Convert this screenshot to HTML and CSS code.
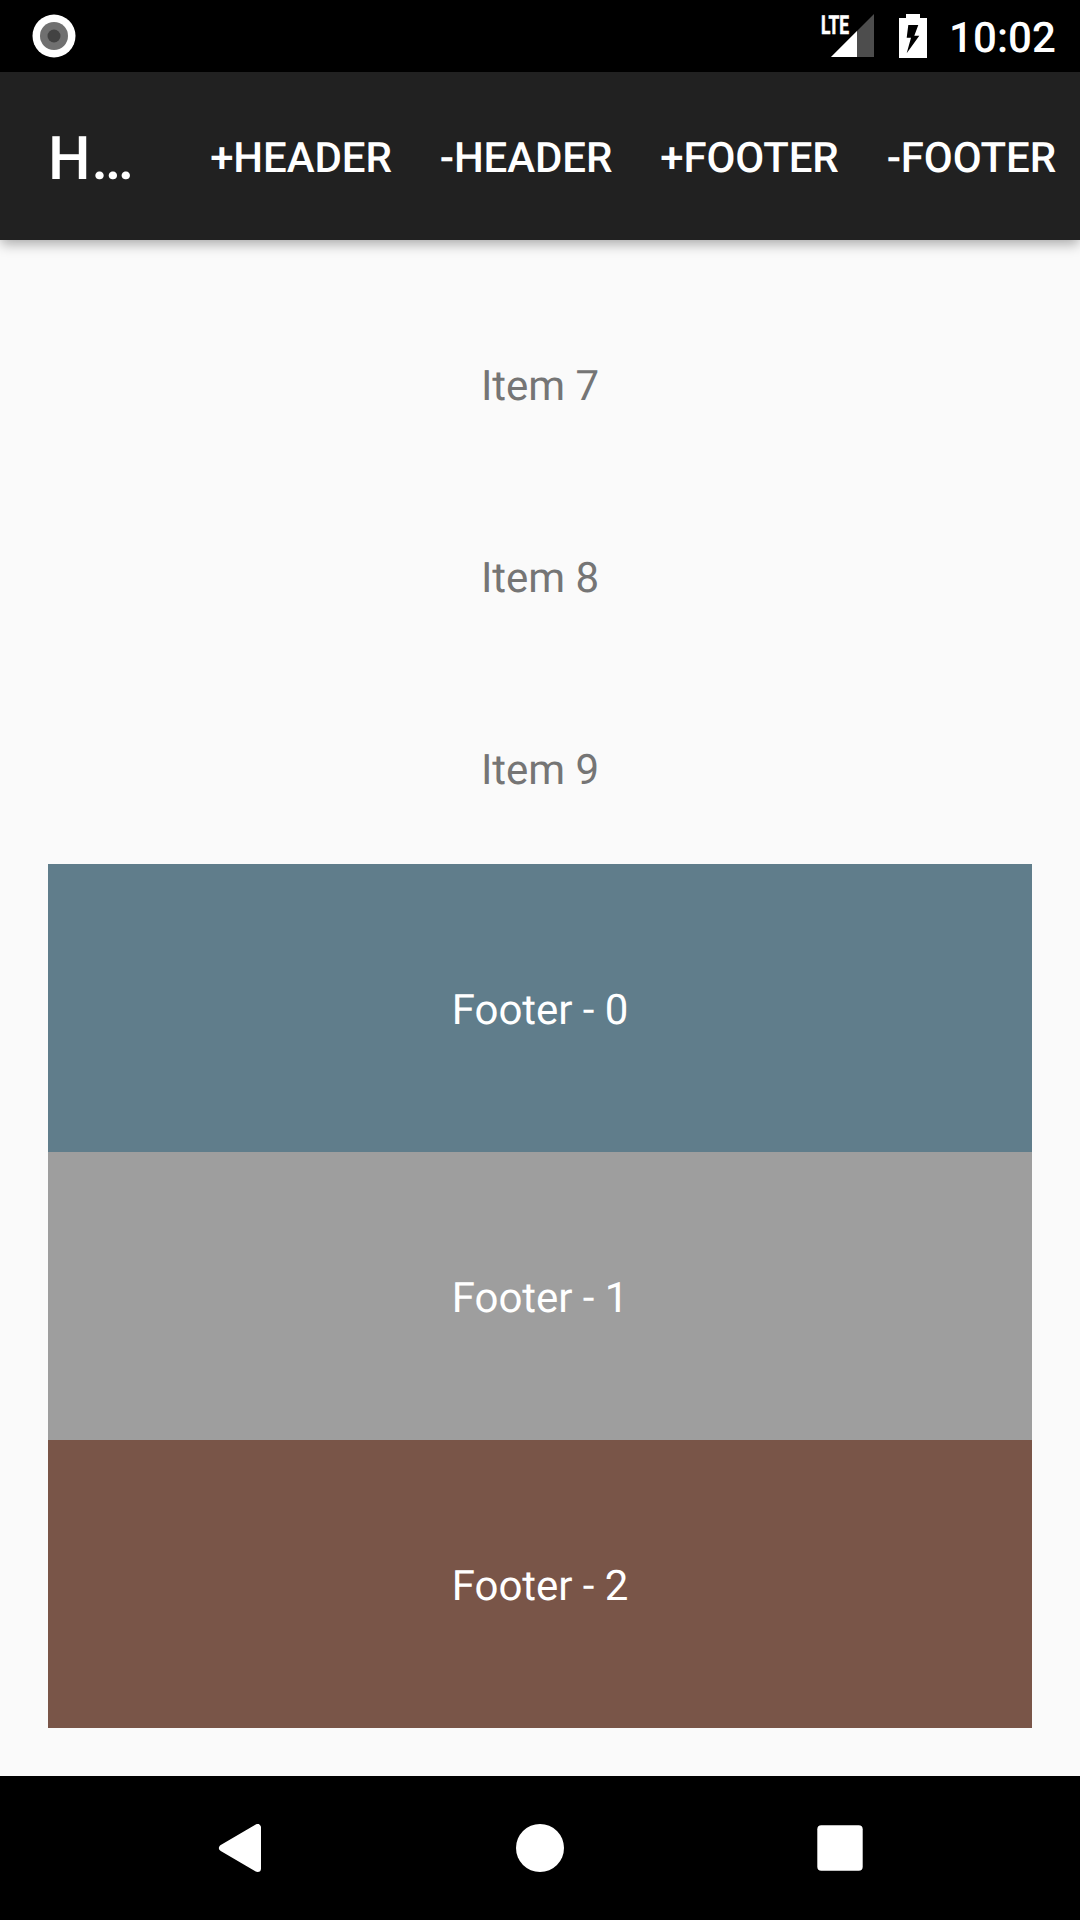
FILE: index.html
```html
<!DOCTYPE html>
<html lang="en">
<head>
<meta charset="utf-8">
<title>HeaderFooter</title>
<link rel="stylesheet" href="styles.css">
</head>
<body>
<div class="screen">
  <div class="status-bar">
    <svg width="44" height="44" viewBox="0 0 44 44"><circle cx="22" cy="22" r="21.5" fill="#fff"/><circle cx="22" cy="22" r="14" fill="#707070"/><circle cx="22" cy="22" r="6.500" fill="#424242"/></svg>
    <div class="status-right">
      <svg class="signal" width="54" height="44" viewBox="0 0 54 44"><path d="M54 0V43H11Z" fill="#4d4d4d"/><path d="M37 17V43H11Z" fill="#fff"/><text class="lte" x="1" y="19.500" textLength="28" lengthAdjust="spacingAndGlyphs">LTE</text></svg>
      <svg class="battery" width="28" height="44" viewBox="0 0 28 44"><path d="M7 0H21V4H28V44H0V4H7Z" fill="#fff"/><path d="M9.300 11H19.300L15.300 21.700H20.300L7.700 39.300L12 23.700H7.700Z" fill="#000"/></svg>
      <span class="clock">10:02</span>
    </div>
  </div>
  <header class="app-bar">
    <h1 class="title">H…</h1>
    <nav class="actions"><span>+HEADER</span><span>-HEADER</span><span>+FOOTER</span><span>-FOOTER</span></nav>
  </header>
  <main class="list">
    <div class="item">Item 7</div>
    <div class="item">Item 8</div>
    <div class="item">Item 9</div>
    <div class="footer blue">Footer - 0</div>
    <div class="footer gray">Footer - 1</div>
    <div class="footer brown">Footer - 2</div>
  </main>
  <div class="nav-bar">
    <svg width="48" height="48" viewBox="0 0 48 48"><path d="M41.500 3.500V44.500L6.500 24Z" fill="#fff" stroke="#fff" stroke-width="7" stroke-linejoin="round"/></svg>
    <svg width="48" height="48" viewBox="0 0 48 48"><circle cx="24" cy="24" r="24" fill="#fff"/></svg>
    <svg width="48" height="48" viewBox="0 0 48 48"><rect x="1.300" y="1.300" width="45.400" height="45.400" rx="4" fill="#fff"/></svg>
  </div>
</div>
</body>
</html>
```
FILE: styles.css
```css
* { box-sizing: border-box; }
body { margin: 0; font-family: Roboto, sans-serif; background: #fafafa; text-rendering: geometricPrecision; }
.screen { width: 1080px; height: 1920px; display: flex; flex-direction: column; overflow: hidden; }
.status-bar { height: 72px; flex: none; background: #000; display: flex; align-items: center; justify-content: space-between; padding: 0 24px 0 32px; }
.status-right { display: flex; align-items: center; }
.signal { margin-right: 25px; overflow: visible; }
.lte { font-size: 26px; font-weight: 700; fill: #fff; stroke: #fff; stroke-width: .6px; }
.battery { margin-right: 22px; }
.clock { color: #fff; font-size: 42px; font-weight: 500; line-height: 68px; padding-top: 5px; letter-spacing: .1px; }
.app-bar { height: 168px; flex: none; background: #212121; color: #fff; display: flex; align-items: center; justify-content: space-between; padding: 4px 24px 0 48px; box-shadow: 0 5px 12px -1px rgba(0,0,0,.33); }
.title { margin: 0; font-size: 60px; font-weight: 500; letter-spacing: .6px; }
.actions { display: flex; gap: 48px; font-size: 42px; font-weight: 500; white-space: nowrap; letter-spacing: -.1px; }
.list { flex: 1; padding: 48px 48px 0; }
.item, .footer { display: flex; align-items: center; justify-content: center; font-size: 42px; padding-top: 4px; letter-spacing: -.05px; }
.item { height: 192px; color: #757575; }
.footer { height: 288px; color: #fff; }
.blue { background: #607d8b; }
.gray { background: #9e9e9e; }
.brown { background: #795548; }
.nav-bar { height: 144px; flex: none; background: #000; display: flex; align-items: center; justify-content: space-between; padding: 0 216px; }
```
